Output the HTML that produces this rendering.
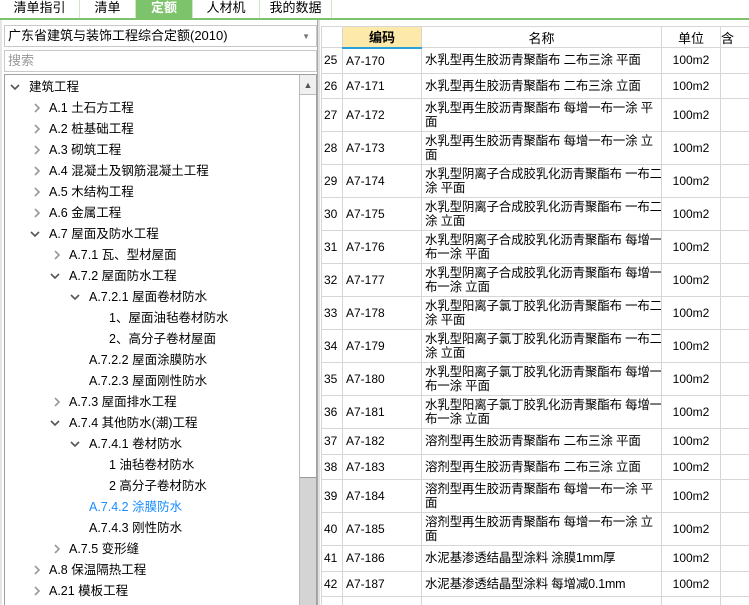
<!DOCTYPE html>
<html><head><meta charset="utf-8"><style>
*{margin:0;padding:0;box-sizing:border-box}
html,body{width:749px;height:605px;overflow:hidden}
body{background:#fff;font-family:"Liberation Sans","Noto Sans CJK SC",sans-serif;font-size:12px;color:#000;position:relative}
.tabs{position:absolute;left:0;top:0;width:749px;height:20px;background:#fff;border-bottom:2px solid #7dc36b}
.tab{position:absolute;top:0;height:18px;line-height:16px;text-align:center;font-size:13px;border-right:1px solid #cfe6c8}
.tab.on{background:#7dc36b;color:#fff;font-weight:bold}
.box{position:absolute;border:1px solid #c8c8c8;background:#fff}
.tree{position:absolute;left:4px;top:74px;width:313px;height:531px;border:1px solid #a0a0a0;border-bottom:none}
.ti{position:absolute;white-space:nowrap;font-size:12.5px;line-height:14px}
.ar{position:absolute;width:10px;height:14px}
.sb{position:absolute;left:299px;top:75px;width:17px;height:530px;background:#d4d4d4;border-left:1px solid #bbb}
.tw{position:absolute;left:321px;top:26px;width:428px;height:579px;overflow:hidden}
table{border-collapse:collapse;table-layout:fixed;width:439px}
td,th{border:1px solid #d6d6d6;font-weight:normal;vertical-align:middle;white-space:nowrap;overflow:hidden}
th{height:21px;font-size:13px;background:#fff}
td{font-size:12px;padding-left:3px;padding-top:0;padding-bottom:0}
td.n{font-size:12.5px;line-height:14px;letter-spacing:-0.2px}
td.u{text-align:center;padding:0}
</style></head><body>
<svg width="0" height="0" style="position:absolute"><defs>
<symbol id="r" viewBox="0 0 10 14"><path d="M3 3 L7 7 L3 11" fill="none" stroke="#999" stroke-width="1.6"/></symbol>
<symbol id="d" viewBox="0 0 10 14"><path d="M1 5 L5 9 L9 5" fill="none" stroke="#555" stroke-width="1.6"/></symbol>
</defs></svg>
<div class="tabs">
<div class="tab" style="left:0;width:80px">清单指引</div>
<div class="tab" style="left:80px;width:56px">清单</div>
<div class="tab on" style="left:136px;width:57px">定额</div>
<div class="tab" style="left:193px;width:67px">人材机</div>
<div class="tab" style="left:260px;width:72px">我的数据</div>
</div>
<div style="position:absolute;left:0;top:20px;width:2px;height:585px;background:#e6e6e6"></div>
<div class="box" style="left:4px;top:25px;width:313px;height:22px;padding:2px 3px;font-size:13px;line-height:16px">广东省建筑与装饰工程综合定额(2010)<span style="position:absolute;right:6px;top:3px;font-size:8px;color:#777">▼</span></div>
<div class="box" style="left:4px;top:50px;width:313px;height:22px;padding:2px 3px;font-size:13px;line-height:16px;color:#999">搜索</div>
<div class="tree"></div>
<div class="sb"><div style="position:absolute;left:0;top:0;width:16px;height:20px;background:#f0f0f0;border-bottom:1px solid #bbb;text-align:center;font-size:9px;line-height:20px;color:#555">▲</div><div style="position:absolute;left:0;top:20px;width:16px;height:383px;background:#fff;border-bottom:1px solid #999"></div></div>
<div style="position:absolute;left:317px;top:20px;width:3px;height:585px;background:#e0e0e0;border-left:1px solid #aaa"></div>

<svg class="ar" style="left:10px;top:80px"><use href="#d"/></svg><div class="ti" style="left:29px;top:80px">建筑工程</div>
<svg class="ar" style="left:32px;top:101px"><use href="#r"/></svg><div class="ti" style="left:49px;top:101px">A.1 土石方工程</div>
<svg class="ar" style="left:32px;top:122px"><use href="#r"/></svg><div class="ti" style="left:49px;top:122px">A.2 桩基础工程</div>
<svg class="ar" style="left:32px;top:143px"><use href="#r"/></svg><div class="ti" style="left:49px;top:143px">A.3 砌筑工程</div>
<svg class="ar" style="left:32px;top:164px"><use href="#r"/></svg><div class="ti" style="left:49px;top:164px">A.4 混凝土及钢筋混凝土工程</div>
<svg class="ar" style="left:32px;top:185px"><use href="#r"/></svg><div class="ti" style="left:49px;top:185px">A.5 木结构工程</div>
<svg class="ar" style="left:32px;top:206px"><use href="#r"/></svg><div class="ti" style="left:49px;top:206px">A.6 金属工程</div>
<svg class="ar" style="left:30px;top:227px"><use href="#d"/></svg><div class="ti" style="left:49px;top:227px">A.7 屋面及防水工程</div>
<svg class="ar" style="left:52px;top:248px"><use href="#r"/></svg><div class="ti" style="left:69px;top:248px">A.7.1 瓦、型材屋面</div>
<svg class="ar" style="left:50px;top:269px"><use href="#d"/></svg><div class="ti" style="left:69px;top:269px">A.7.2 屋面防水工程</div>
<svg class="ar" style="left:70px;top:290px"><use href="#d"/></svg><div class="ti" style="left:89px;top:290px">A.7.2.1 屋面卷材防水</div>
<div class="ti" style="left:109px;top:311px">1、屋面油毡卷材防水</div>
<div class="ti" style="left:109px;top:332px">2、高分子卷材屋面</div>
<div class="ti" style="left:89px;top:353px">A.7.2.2 屋面涂膜防水</div>
<div class="ti" style="left:89px;top:374px">A.7.2.3 屋面刚性防水</div>
<svg class="ar" style="left:52px;top:395px"><use href="#r"/></svg><div class="ti" style="left:69px;top:395px">A.7.3 屋面排水工程</div>
<svg class="ar" style="left:50px;top:416px"><use href="#d"/></svg><div class="ti" style="left:69px;top:416px">A.7.4 其他防水(潮)工程</div>
<svg class="ar" style="left:70px;top:437px"><use href="#d"/></svg><div class="ti" style="left:89px;top:437px">A.7.4.1 卷材防水</div>
<div class="ti" style="left:109px;top:458px">1 油毡卷材防水</div>
<div class="ti" style="left:109px;top:479px">2 高分子卷材防水</div>
<div class="ti" style="left:89px;top:500px;color:#1a8cff">A.7.4.2 涂膜防水</div>
<div class="ti" style="left:89px;top:521px">A.7.4.3 刚性防水</div>
<svg class="ar" style="left:52px;top:542px"><use href="#r"/></svg><div class="ti" style="left:69px;top:542px">A.7.5 变形缝</div>
<svg class="ar" style="left:32px;top:563px"><use href="#r"/></svg><div class="ti" style="left:49px;top:563px">A.8 保温隔热工程</div>
<svg class="ar" style="left:32px;top:584px"><use href="#r"/></svg><div class="ti" style="left:49px;top:584px">A.21 模板工程</div>

<div class="tw"><table>
<colgroup><col style="width:21px"><col style="width:79px"><col style="width:240px"><col style="width:59px"><col style="width:40px"></colgroup>
<tr><th></th><th style="background:#fde9a9;font-weight:bold;border-bottom:2px solid #2aa0d8">编码</th><th>名称</th><th>单位</th><th style="text-align:left">含</th></tr>
<tr style="height:25.5px"><td style="padding-left:2px">25</td><td>A7-170</td><td class="n">水乳型再生胶沥青聚酯布 二布三涂 平面</td><td class="u">100m2</td><td></td></tr>
<tr style="height:25.5px"><td style="padding-left:2px">26</td><td>A7-171</td><td class="n">水乳型再生胶沥青聚酯布 二布三涂 立面</td><td class="u">100m2</td><td></td></tr>
<tr style="height:33px"><td style="padding-left:2px">27</td><td>A7-172</td><td class="n">水乳型再生胶沥青聚酯布 每增一布一涂 平<br>面</td><td class="u">100m2</td><td></td></tr>
<tr style="height:33px"><td style="padding-left:2px">28</td><td>A7-173</td><td class="n">水乳型再生胶沥青聚酯布 每增一布一涂 立<br>面</td><td class="u">100m2</td><td></td></tr>
<tr style="height:33px"><td style="padding-left:2px">29</td><td>A7-174</td><td class="n">水乳型阴离子合成胶乳化沥青聚酯布 一布二<br>涂 平面</td><td class="u">100m2</td><td></td></tr>
<tr style="height:33px"><td style="padding-left:2px">30</td><td>A7-175</td><td class="n">水乳型阴离子合成胶乳化沥青聚酯布 一布二<br>涂 立面</td><td class="u">100m2</td><td></td></tr>
<tr style="height:33px"><td style="padding-left:2px">31</td><td>A7-176</td><td class="n">水乳型阴离子合成胶乳化沥青聚酯布 每增一<br>布一涂 平面</td><td class="u">100m2</td><td></td></tr>
<tr style="height:33px"><td style="padding-left:2px">32</td><td>A7-177</td><td class="n">水乳型阴离子合成胶乳化沥青聚酯布 每增一<br>布一涂 立面</td><td class="u">100m2</td><td></td></tr>
<tr style="height:33px"><td style="padding-left:2px">33</td><td>A7-178</td><td class="n">水乳型阳离子氯丁胶乳化沥青聚酯布 一布二<br>涂 平面</td><td class="u">100m2</td><td></td></tr>
<tr style="height:33px"><td style="padding-left:2px">34</td><td>A7-179</td><td class="n">水乳型阳离子氯丁胶乳化沥青聚酯布 一布二<br>涂 立面</td><td class="u">100m2</td><td></td></tr>
<tr style="height:33px"><td style="padding-left:2px">35</td><td>A7-180</td><td class="n">水乳型阳离子氯丁胶乳化沥青聚酯布 每增一<br>布一涂 平面</td><td class="u">100m2</td><td></td></tr>
<tr style="height:33px"><td style="padding-left:2px">36</td><td>A7-181</td><td class="n">水乳型阳离子氯丁胶乳化沥青聚酯布 每增一<br>布一涂 立面</td><td class="u">100m2</td><td></td></tr>
<tr style="height:25.5px"><td style="padding-left:2px">37</td><td>A7-182</td><td class="n">溶剂型再生胶沥青聚酯布 二布三涂 平面</td><td class="u">100m2</td><td></td></tr>
<tr style="height:25.5px"><td style="padding-left:2px">38</td><td>A7-183</td><td class="n">溶剂型再生胶沥青聚酯布 二布三涂 立面</td><td class="u">100m2</td><td></td></tr>
<tr style="height:33px"><td style="padding-left:2px">39</td><td>A7-184</td><td class="n">溶剂型再生胶沥青聚酯布 每增一布一涂 平<br>面</td><td class="u">100m2</td><td></td></tr>
<tr style="height:33px"><td style="padding-left:2px">40</td><td>A7-185</td><td class="n">溶剂型再生胶沥青聚酯布 每增一布一涂 立<br>面</td><td class="u">100m2</td><td></td></tr>
<tr style="height:25.5px"><td style="padding-left:2px">41</td><td>A7-186</td><td class="n">水泥基渗透结晶型涂料 涂膜1mm厚</td><td class="u">100m2</td><td></td></tr>
<tr style="height:25.5px"><td style="padding-left:2px">42</td><td>A7-187</td><td class="n">水泥基渗透结晶型涂料 每增减0.1mm</td><td class="u">100m2</td><td></td></tr>
<tr style="height:25.5px"><td></td><td></td><td></td><td></td><td></td></tr>
</table></div>
</body></html>
